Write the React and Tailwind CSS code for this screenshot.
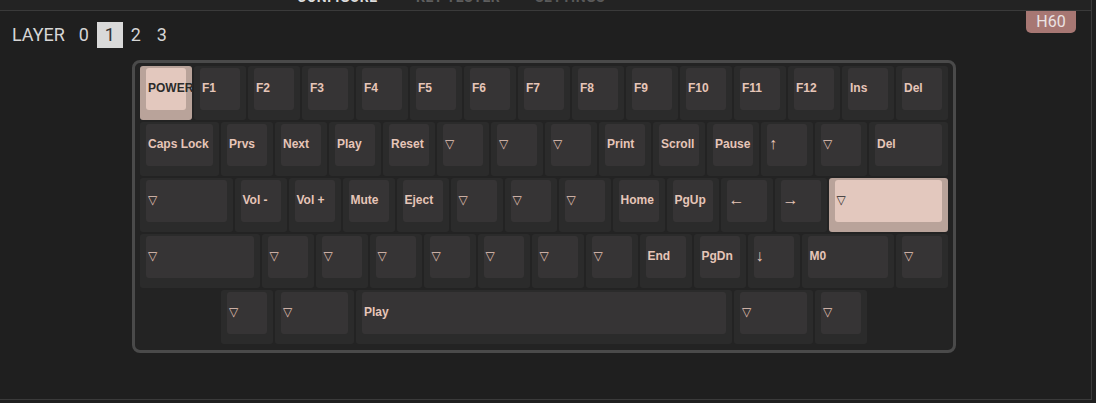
import React from "react";

const rows = [
  [["POWER", 1, true], ["F1"], ["F2"], ["F3"], ["F4"], ["F5"], ["F6"], ["F7"], ["F8"], ["F9"], ["F10"], ["F11"], ["F12"], ["Ins"], ["Del"]],
  [["Caps Lock", 1.5], ["Prvs"], ["Next"], ["Play"], ["Reset"], ["▽"], ["▽"], ["▽"], ["Print"], ["Scroll"], ["Pause"], ["↑"], ["▽"], ["Del", 1.5]],
  [["▽", 1.75], ["Vol -"], ["Vol +"], ["Mute"], ["Eject"], ["▽"], ["▽"], ["▽"], ["Home"], ["PgUp"], ["←"], ["→"], ["▽", 2.25, true]],
  [["▽", 2.25], ["▽"], ["▽"], ["▽"], ["▽"], ["▽"], ["▽"], ["▽"], ["End"], ["PgDn"], ["↓"], ["M0", 1.75], ["▽"]],
  [[null, 1.5], ["▽"], ["▽", 1.5], ["Play", 7], ["▽", 1.5], ["▽"]],
];

const arrows = ["↑", "↓", "←", "→"];

function Key({ label, u = 1, hl }) {
  const w = 54 * u - 2;
  if (label === null) return <div style={{ width: w }} className="h-[54px] shrink-0" />;
  const isArrow = arrows.includes(label);
  return (
    <div
      style={{ width: w }}
      className={`h-[54px] shrink-0 rounded-[3px] px-[6px] pt-[2px] pb-[10px] ${hl ? "bg-[#b9a39a]" : "bg-[#2b2b2b]"}`}
    >
      <div
        className={`h-full rounded-[3px] flex items-center pl-[2px] pb-[2px] whitespace-nowrap ${
          hl ? "bg-[#e3c8be] text-[#2b2b2b]" : "bg-[#363435] text-[#e6c5b8]"
        } ${isArrow ? "text-[16px] font-normal font-['Liberation_Sans','DejaVu_Sans',sans-serif]" : "text-[12px] font-bold"}`}
      >
        {label}
      </div>
    </div>
  );
}

export default function App() {
  return (
    <div className="w-[1096px] h-[403px] bg-[#1f1f1f] overflow-hidden flex flex-col font-['Liberation_Sans','DejaVu_Sans',sans-serif]">
      <div className="flex h-[399px]">
        <div className="w-[1092px] border-r border-[#3a3a3a] flex flex-col">
          {/* top menu, scrolled up */}
          <div className="h-[11px] bg-[#232323] border-b border-[#3a3a3a] overflow-hidden">
            <div className="flex pl-[297px] mt-[-13px] text-[14px] leading-[20px] font-bold tracking-[0.5px] font-['Roboto',sans-serif]">
              <span className="text-[#dcdcdc] w-[119px]">CONFIGURE</span>
              <span className="text-[#5e5e5e] w-[119px]">KEY TESTER</span>
              <span className="text-[#5a5a5a]">SETTINGS</span>
            </div>
          </div>

          <div className="flex justify-between">
            <div className="flex items-center pl-[12px] pt-[10px] font-['Roboto',sans-serif] text-[18px] text-[#d6d6d6]">
              <span className="mr-[6px]">LAYER</span>
              {["0", "1", "2", "3"].map((n) => (
                <span
                  key={n}
                  className={`w-[26px] h-[26px] flex items-center justify-center ${n === "1" ? "bg-[#d9d9d9] text-[#333]" : ""}`}
                >
                  {n}
                </span>
              ))}
            </div>
            <div className="mr-[15px] w-[50px] h-[22px] rounded-b-[5px] bg-[#a77773] text-[#ebe3e3] text-[16px] flex items-center justify-center font-['Roboto',sans-serif]">
              H60
            </div>
          </div>

          <div className="ml-[132px] mt-[12px] w-[824px] border-[3px] border-[#4a4a4a] rounded-[8px] bg-[#232323] px-[5px] pt-[3px] pb-[6px] flex flex-col gap-[2px]">
            {rows.map((row, i) => (
              <div key={i} className="flex gap-[2px]">
                {row.map(([label, u, hl], j) => (
                  <Key key={j} label={label} u={u} hl={hl} />
                ))}
              </div>
            ))}
          </div>
        </div>
      </div>
      <div className="h-[1px] w-[1092px] bg-[#3a3a3a]" />
    </div>
  );
}
